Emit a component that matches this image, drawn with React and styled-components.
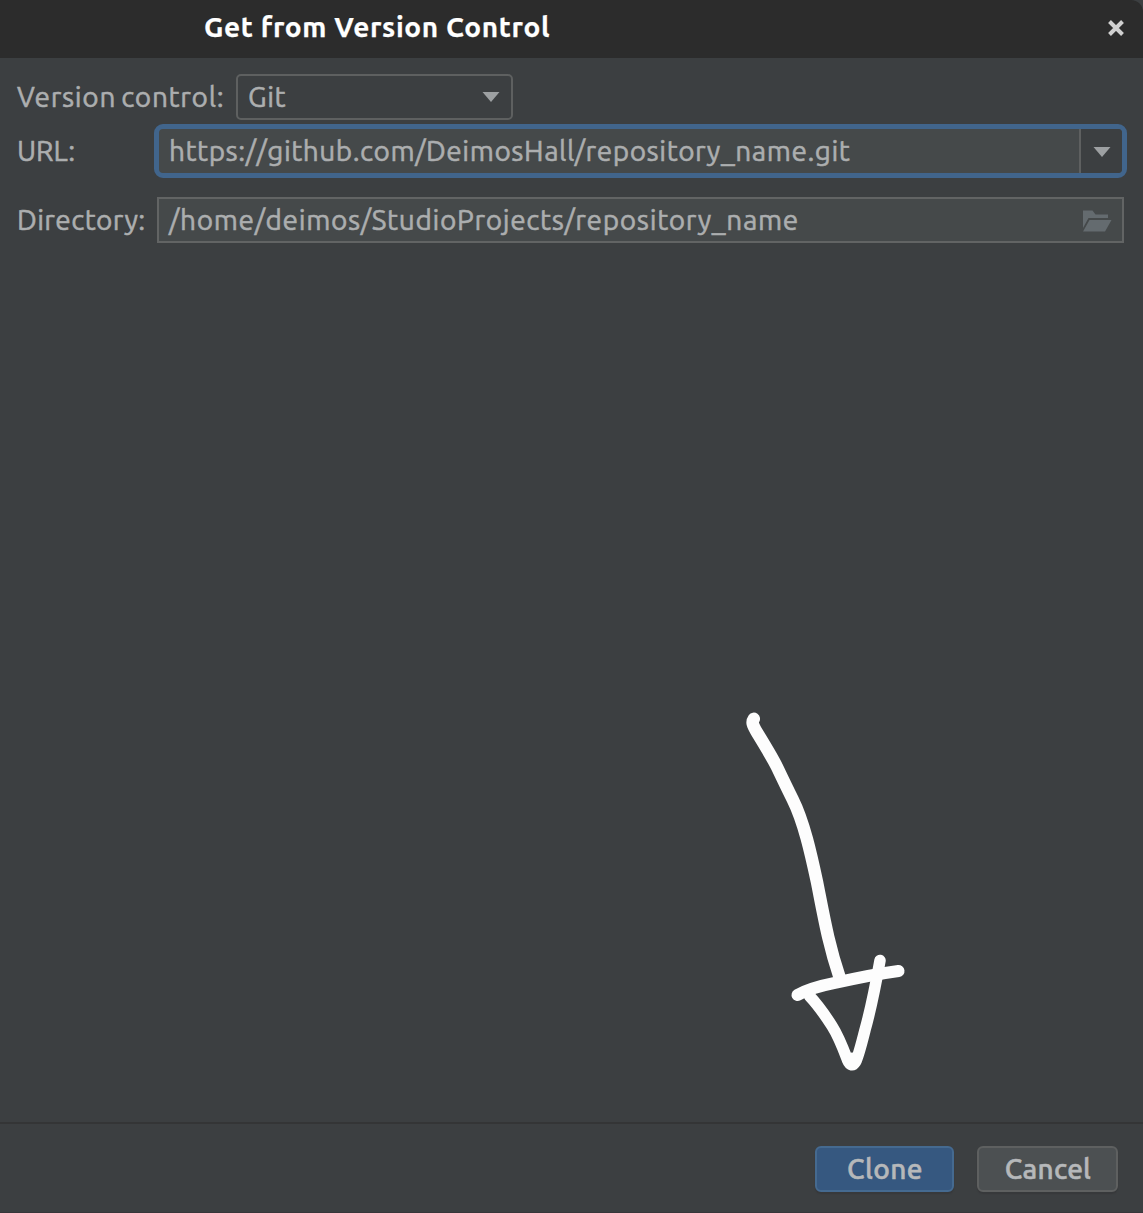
import React from "react";
import styled, { createGlobalStyle } from "styled-components";

const GlobalStyle = createGlobalStyle`
  * { box-sizing: border-box; }
  body { margin: 0; background: #3c3f41; }
`;

const Dialog = styled.div`
  position: relative;
  display: flex;
  flex-direction: column;
  width: 1143px;
  height: 1213px;
  background: #3c3f41;
  color: #acaeaf;
  font-family: Ubuntu, "Noto Sans", sans-serif;
  font-size: 28px;
  line-height: 36px;
  overflow: hidden;
  border-bottom: 1px solid #37363a;
`;

const TitleBar = styled.header`
  display: flex;
  align-items: center;
  justify-content: space-between;
  flex: none;
  height: 58px;
  padding: 0 18px 2px 204px;
  background: #2c2c2c;
  border-top-right-radius: 12px;
`;

const Text = styled.span`
  display: block;
  white-space: pre;
  letter-spacing: ${(p) => p.$spacing || 0}px;
  word-spacing: ${(p) => p.$wordSpacing || 0}px;
  -webkit-text-stroke: 0.55px currentColor;
`;

const Title = styled(Text)`
  padding-bottom: 2px;
  font-weight: 700;
  color: #ffffff;
  -webkit-text-stroke-width: 0.25px;
`;

const CloseButton = styled.button`
  display: flex;
  padding: 0;
  border: 0;
  background: none;
`;

const Form = styled.main`
  display: flex;
  flex-direction: column;
  flex: 1;
  padding: 16px 16px 0 17px;
`;

const Row = styled.div`
  display: flex;
  align-items: center;
  height: ${(p) => p.$height}px;
  margin-bottom: ${(p) => p.$gap || 0}px;
`;

const Label = styled.label`
  flex: none;
  width: ${(p) => p.$width}px;
`;

const Select = styled.div`
  display: flex;
  align-items: center;
  justify-content: space-between;
  width: 277px;
  height: 46px;
  padding: 0 11px 0 10px;
  border: 2px solid #5e6060;
  border-radius: 5px;
`;

const UrlField = styled.div`
  display: flex;
  flex: 1;
  height: 54px;
  background: #45494a;
  border: 5px solid #41658c;
  border-radius: 9px;
  overflow: hidden;
`;

const UrlValue = styled.div`
  display: flex;
  align-items: center;
  flex: 1;
  padding-left: 10px;
`;

const DropButton = styled.div`
  display: flex;
  align-items: center;
  justify-content: center;
  width: 43px;
  padding-top: 1px;
  background: #3c3f41;
  border-left: 2px solid #5e6060;
`;

const PathField = styled.div`
  display: flex;
  align-items: center;
  justify-content: space-between;
  flex: 1;
  height: 46px;
  margin-right: 3px;
  padding: 0 10px;
  background: #45494a;
  border: 2px solid #626464;
`;

const Footer = styled.footer`
  display: flex;
  justify-content: flex-end;
  gap: 23px;
  height: 90px;
  padding: 22px 25px 0 0;
  border-top: 2px solid #343536;
`;

const Button = styled.button`
  display: flex;
  align-items: center;
  justify-content: center;
  width: ${(p) => p.$width}px;
  height: 46px;
  padding: 0 0 0 1px;
  font: inherit;
  font-weight: 500;
  color: #b6b8ba;
  background: ${(p) => (p.$primary ? "#365880" : "#4c5052")};
  border: 2px solid ${(p) => (p.$primary ? "#456a90" : "#5e6060")};
  border-radius: 6px;
  box-shadow: 0 2px 1px #37393b;
`;

const Annotation = styled.svg`
  position: absolute;
  left: 730px;
  top: 700px;
  pointer-events: none;
`;

const Caret = () => (
  <svg width="18" height="10" viewBox="0 0 18 10" fill="#9da0a2">
    <path d="M0.5 0h17L9 10z" />
  </svg>
);

const FolderIcon = () => (
  <svg width="30" height="24" viewBox="0 -2 30 24" fill="#646b6f">
    <path d="M1 0.5h9.500l3 4H26v3.500H6.500L1 18z" />
    <path d="M7.500 10H29.500L23 21.500H1z" />
  </svg>
);

const HandDrawnArrow = () => (
  <Annotation
    width="190"
    height="380"
    viewBox="730 700 190 380"
    fill="none"
    stroke="#fdfdfd"
    strokeWidth="11.500"
    strokeLinecap="round"
    strokeLinejoin="round"
  >
    <path strokeWidth="12.500" d="M753.800 718.800C751.500 722 752.500 725 757 732.500C765 745.500 772 757 777 767C782 777.500 787 788 792.500 799C804 822 811 854 817 882C824.500 920 828.500 944 839.500 977" />
    <path strokeWidth="12" d="M797.500 995C808 989 822 985.500 836 982.700C859 977.500 880 973.500 898.500 971" />
    <path d="M880 960.500C876 983 869.500 1014 865 1030C862 1042 858.500 1056 855.500 1062C853 1066 850 1066 847.500 1060C843 1048 839 1037 832 1026C825 1015 818 1005 809.500 996" />
    <path strokeWidth="7" d="M852 1056V1065" />
  </Annotation>
);

export default function App() {
  return (
    <>
      <GlobalStyle />
      <Dialog>
        <TitleBar>
          <Title $spacing={0.63}>Get from Version Control</Title>
          <CloseButton aria-label="Close">
            <svg width="18" height="18" viewBox="0 0 18 18" stroke="#d0d0d0" strokeWidth="4">
              <path d="M2.500 2.500l13 13M15.500 2.500l-13 13" />
            </svg>
          </CloseButton>
        </TitleBar>
        <Form>
          <Row $height={46} $gap={4}>
            <Label $width={219}><Text $spacing={0.7} $wordSpacing={-2}>Version control:</Text></Label>
            <Select><Text $spacing={0.6}>Git</Text><Caret /></Select>
          </Row>
          <Row $height={54} $gap={19}>
            <Label $width={137}><Text>URL:</Text></Label>
            <UrlField>
              <UrlValue><Text $spacing={0.55}>https://github.com/DeimosHall/repository_name.git</Text></UrlValue>
              <DropButton><Caret /></DropButton>
            </UrlField>
          </Row>
          <Row $height={46}>
            <Label $width={140}><Text $spacing={0.4}>Directory:</Text></Label>
            <PathField>
              <Text $spacing={0.67}>/home/deimos/StudioProjects/repository_name</Text>
              <FolderIcon />
            </PathField>
          </Row>
        </Form>
        <Footer>
          <Button $primary $width={139}><Text $spacing={0.4}>Clone</Text></Button>
          <Button $width={141}><Text $spacing={0.2}>Cancel</Text></Button>
        </Footer>
        <HandDrawnArrow />
      </Dialog>
    </>
  );
}
